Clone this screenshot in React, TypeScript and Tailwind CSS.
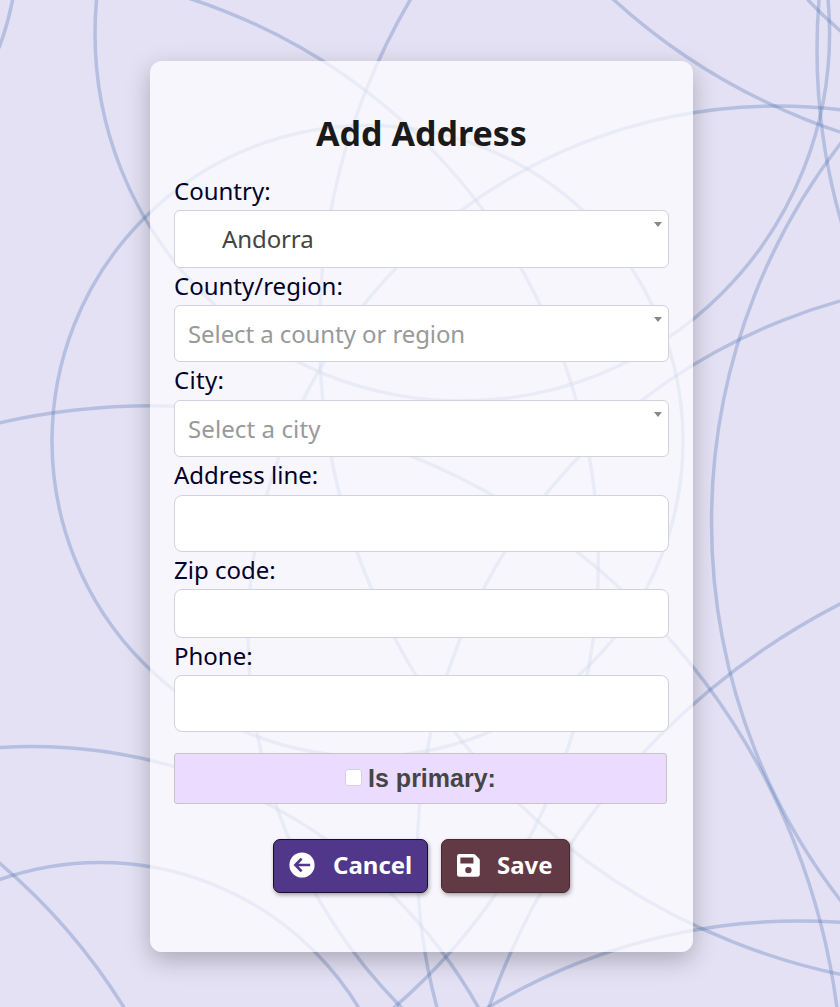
const circles: [number, number, number][] = [
  [367.5, 441, 315.5],
  [462.3, 33.5, 367.3],
  [777, 635, 529],
  [974.7, 332.9, 655.3],
  [7.5, 560.7, 590.9],
  [1040.4, -470.6, 635],
  [1437, 50, 620],
  [1330.5, 522, 619],
  [152.5, 1095.8, 690],
  [994.7, 857.5, 577.5],
  [1171.6, 1247.2, 723.6],
  [799, 1522, 601],
  [100, 1165.5, 303],
  [32, 1258.5, 512],
];

const arcs = [
  "M807.5 -0.5 Q823 16 841 31.5",
  "M-1 862.5 A620 620 0 0 1 125 1009",
  "M13 -2 Q8 24 -1 48",
];

function Backdrop() {
  return (
    <svg
      className="absolute inset-0"
      width="840"
      height="1007"
      viewBox="0 0 840 1007"
      fill="none"
      stroke="#4b72b4"
      strokeOpacity="0.3"
      strokeWidth="3.5"
    >
      {circles.map(([cx, cy, r]) => (
        <circle key={`${cx}-${cy}`} cx={cx} cy={cy} r={r} />
      ))}
      {arcs.map((d) => (
        <path key={d} d={d} />
      ))}
    </svg>
  );
}

function BackIcon() {
  return (
    <svg width="26" height="26" viewBox="0 0 26 26" fill="none">
      <circle cx="13" cy="13" r="12.6" fill="#fff" />
      <path d="M12.6 6.6L6.4 13L12.6 19.4M6.6 13H21.2" stroke="#50378a" strokeWidth="2.7" />
    </svg>
  );
}

function SaveIcon() {
  return (
    <svg width="23" height="23" viewBox="0 0 23 23">
      <path
        fill="#fff"
        fillRule="evenodd"
        d="M2.4 0H16.5Q17.4 0 18 .6L22.2 4.8Q22.8 5.4 22.8 6.3V20.4Q22.8 22.8 20.4 22.8H2.4Q0 22.8 0 20.4V2.4Q0 0 2.4 0ZM3.4 3.4V9.5H16.4V3.4ZM11.4 12.9A3.2 3.2 0 1 0 11.4 19.3A3.2 3.2 0 1 0 11.4 12.9Z"
      />
    </svg>
  );
}

function Label({ text, className }: { text: string; className: string }) {
  return (
    <label className={`block h-[37px] whitespace-nowrap text-[24px] text-[#00002a] ${className}`}>
      <span>{text}</span>
    </label>
  );
}

function Select({ children, className }: { children: string; className: string }) {
  return (
    <div className={`flex items-center justify-between rounded-[6px] border border-[#ced4da] bg-white whitespace-nowrap text-[24px] ${className}`}>
      <span>{children}</span>
      <svg className="mt-[11px] mr-[6px] self-start" width="8" height="5" viewBox="0 0 8 5">
        <path d="M0 0H8L4 5Z" fill="#888" />
      </svg>
    </div>
  );
}

function Input({ className }: { className: string }) {
  return <input className={`block w-full rounded-[8px] border border-[#ced4da] bg-white px-3 text-[24px] outline-none ${className}`} />;
}

export default function App() {
  return (
    <div className="relative h-[1007px] w-[840px] overflow-hidden bg-[#e4e1f4] font-['Noto_Sans',sans-serif]">
      <Backdrop />
      <main className="relative mt-[61px] ml-[150px] flex h-[891px] w-[543px] flex-col rounded-[12px] bg-white/70 px-6 shadow-[0_8px_24px_rgba(0,0,0,0.25)]">
        <h1 className="mt-[48px] h-[64px] text-center text-[34px] leading-[48px] font-bold whitespace-nowrap text-[#1a1a1a]">
          <span>Add Address</span>
        </h1>

        <Label text="Country:" className="leading-[35px]" />
        <Select className="h-[58px] pl-[47px] tracking-[-0.1px] text-[#444]">Andorra</Select>
        <Label text="County/region:" className="leading-[35px]" />
        <Select className="h-[57px] pl-[13px] tracking-[-0.09px] text-[#999]">Select a county or region</Select>
        <Label text="City:" className="mt-px leading-[33px] tracking-[0.3px]" />
        <Select className="h-[57px] pl-[13px] tracking-[0.1px] text-[#999]">Select a city</Select>
        <Label text="Address line:" className="mt-px leading-[33px]" />
        <Input className="h-[57px]" />
        <Label text="Zip code:" className="leading-[35px]" />
        <Input className="h-[49px]" />
        <Label text="Phone:" className="leading-[35px]" />
        <Input className="h-[57px]" />

        <label className="mt-[21px] flex h-[51px] w-[493px] items-center justify-center gap-[6px] rounded-[3px] border border-[#c5c5c5] bg-[#ebdcff] font-['Liberation_Sans',sans-serif] text-[25px] font-bold text-[#454545]">
          <input type="checkbox" className="mb-[2px] size-[17px] appearance-none rounded-[3px] border border-[#d8d0e0] bg-white" />
          <span>Is primary:</span>
        </label>

        <div className="mt-[35px] flex justify-center gap-[13px] text-[24px] font-bold text-white">
          <button className="flex h-[54px] w-[155px] items-center rounded-[7px] border border-[#150f28] bg-[#50378a] pb-[2px] pl-[15px] whitespace-nowrap shadow-[1px_2px_4px_rgba(0,0,0,0.35)]">
            <BackIcon />
            <span className="ml-[18px]">Cancel</span>
          </button>
          <button className="flex h-[54px] w-[129px] items-center rounded-[7px] border border-[#4a2630] bg-[#623a46] pb-[2px] pl-[15px] whitespace-nowrap shadow-[1px_2px_4px_rgba(0,0,0,0.35)]">
            <SaveIcon />
            <span className="ml-[17px]">Save</span>
          </button>
        </div>
      </main>
    </div>
  );
}
